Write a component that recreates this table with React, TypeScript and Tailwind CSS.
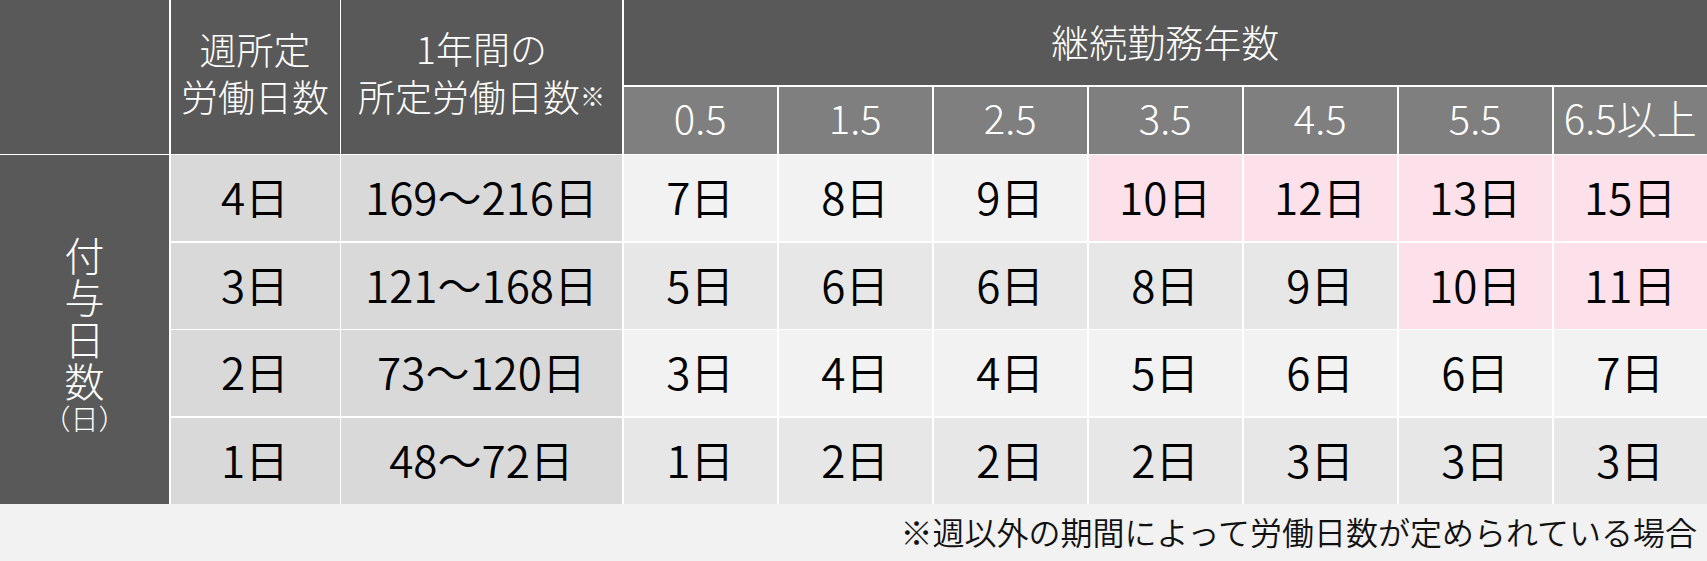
// Annual paid leave table (付与日数) for part-time workers.

const YEARS = ["0.5", "1.5", "2.5", "3.5", "4.5", "5.5", "6.5以上"];

type Row = {
  week: string;
  year: string;
  days: number[];
  pinkFrom: number; // index of first pink cell, 7 = none
  bg: string;
};

const ROWS: Row[] = [
  { week: "4日", year: "169～216日", days: [7, 8, 9, 10, 12, 13, 15], pinkFrom: 3, bg: "bg-[#f2f2f2]" },
  { week: "3日", year: "121～168日", days: [5, 6, 6, 8, 9, 10, 11], pinkFrom: 5, bg: "bg-[#e7e7e7]" },
  { week: "2日", year: "73～120日", days: [3, 4, 4, 5, 6, 6, 7], pinkFrom: 7, bg: "bg-[#f2f2f2]" },
  { week: "1日", year: "48～72日", days: [1, 2, 2, 2, 3, 3, 3], pinkFrom: 7, bg: "bg-[#e7e7e7]" },
];

const font = "font-['Noto_Sans_CJK_JP','Noto_Sans',sans-serif]";

export default function App() {
  return (
    <div className={`w-[1707px] h-[561px] bg-[#f2f2f2] font-light ${font}`}>
      <div className="grid grid-cols-[169px_169px_281px_repeat(7,1fr)] grid-rows-[85px_67px_repeat(4,86px)] gap-[1.5px] bg-white">
        {/* ─── Header ─── */}
        <div className="row-span-2 bg-[#595959]" />
        <div className="row-span-2 bg-[#595959] flex items-center justify-center text-center text-white text-[37px] leading-[47px] pb-2">
          <p>
            週所定
            <br />
            労働日数
          </p>
        </div>
        <div className="row-span-2 bg-[#595959] flex items-center justify-center text-center text-white text-[37px] leading-[47px] pb-2">
          <p>
            1年間の
            <br />
            所定労働日数<span className="text-[25px] align-[6px]">※</span>
          </p>
        </div>
        <div className="col-span-7 bg-[#595959] flex items-center justify-center text-white text-[38px] pb-1">
          継続勤務年数
        </div>
        {YEARS.map((y) => (
          <div
            key={y}
            className="bg-[#7f7f7f] flex items-center justify-center text-white text-[40px] pb-1.5"
          >
            {y}
          </div>
        ))}

        {/* ─── Body ─── */}
        <div className="row-span-4 bg-[#595959] flex flex-col items-center justify-center text-white pt-3">
          <span className="[writing-mode:vertical-rl] text-[40px] leading-none tracking-[2px]">
            付与日数
          </span>
          <span className="text-[28px] leading-[32px] -mt-0.5">（日）</span>
        </div>
        {ROWS.map((r) => (
          <Cells key={r.week} row={r} />
        ))}
      </div>

      {/* ─── Footnote ─── */}
      <div className="h-[60px] flex items-center justify-end pr-[10px] pb-1.5 text-[32px] font-[350] text-[#111]">
        ※週以外の期間によって労働日数が定められている場合
      </div>
    </div>
  );
}

function Cells({ row }: { row: Row }) {
  const cell = "flex items-center justify-center text-[44px] font-[350] text-black pb-1";
  return (
    <>
      <div className={`bg-[#d9d9d9] ${cell}`}>{row.week}</div>
      <div className={`bg-[#d9d9d9] ${cell}`}>{row.year}</div>
      {row.days.map((d, i) => (
        <div key={i} className={`${i >= row.pinkFrom ? "bg-[#fde1ea]" : row.bg} ${cell}`}>
          {d}日
        </div>
      ))}
    </>
  );
}
